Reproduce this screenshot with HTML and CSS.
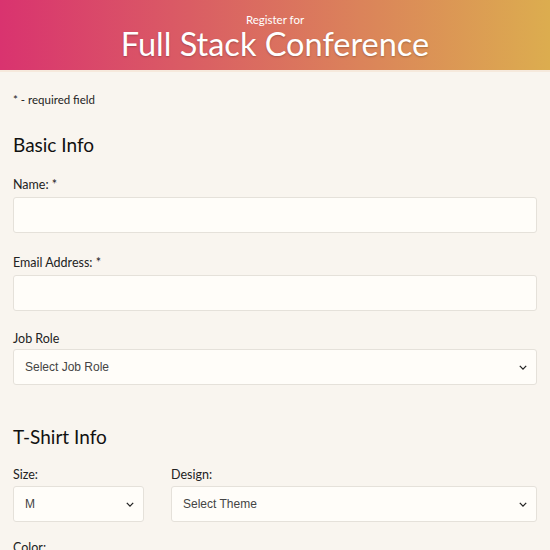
FILE: index.html
```html
<!DOCTYPE html>
<html>
<head>
<meta charset="utf-8">
<link rel="stylesheet" href="styles.css">
</head>
<body>
<header class="hero">
  <span class="hero-sub">Register for</span>
  <h1 class="hero-title">Full Stack Conference</h1>
</header>
<main class="form">
  <p class="note">* - required field</p>
  <section class="group">
    <h2 class="group-title">Basic Info</h2>
    <div class="field">
      <label class="label">Name: *</label>
      <input class="input" type="text">
    </div>
    <div class="field email">
      <label class="label">Email Address: *</label>
      <input class="input" type="text">
    </div>
    <div class="field job">
      <label class="label">Job Role</label>
      <div class="select">
        <span>Select Job Role</span>
        <svg class="chev" viewBox="0 0 10 6" width="8" height="5"><path d="M1 1l4 4 4-4" fill="none" stroke="#222" stroke-width="1.6"/></svg>
      </div>
    </div>
  </section>
  <section class="group tshirt">
    <h2 class="group-title">T-Shirt Info</h2>
    <div class="row">
      <div class="field size">
        <label class="label">Size:</label>
        <div class="select">
          <span>M</span>
          <svg class="chev" viewBox="0 0 10 6" width="8" height="5"><path d="M1 1l4 4 4-4" fill="none" stroke="#222" stroke-width="1.6"/></svg>
        </div>
      </div>
      <div class="field design">
        <label class="label">Design:</label>
        <div class="select">
          <span>Select Theme</span>
          <svg class="chev" viewBox="0 0 10 6" width="8" height="5"><path d="M1 1l4 4 4-4" fill="none" stroke="#222" stroke-width="1.6"/></svg>
        </div>
      </div>
    </div>
    <div class="field">
      <label class="label">Color:</label>
    </div>
  </section>
</main>
</body>
</html>
```
FILE: styles.css
```css
html, body { margin: 0; padding: 0; }
body {
  background: #f9f5ef;
  font-family: "Lato", "Open Sans", sans-serif;
  color: #111;
  width: 550px;
  overflow: hidden;
}
.hero {
  height: 72px;
  background: linear-gradient(to right, #d9336f, #dcad4f);
  border-bottom: 2px solid #f6e9dc;
  display: flex;
  flex-direction: column;
  align-items: center;
  color: #fff;
  box-sizing: border-box;
  padding-top: 13px;
}
.hero-sub { font-size: 11.5px; line-height: 14px; }
.hero-title {
  margin: 0;
  font-weight: 400;
  font-size: 32.5px;
  line-height: 34px;
  text-shadow: 0 1px 2px rgba(0,0,0,0.25);
}
.form { padding: 0 13px; }
.note { margin: 0; padding-top: 21px; font-size: 11.5px; line-height: 14px; color: #222; }
.group-title { margin: 0; font-weight: 400; font-size: 19px; line-height: 24px; }
.group { padding-top: 26px; }
.group-title { margin-bottom: 21px; }
.field { display: flex; flex-direction: column; margin-bottom: 23px; }
.email { margin-bottom: 21px; }
.job .label { margin-bottom: 3px; }
.label { font-size: 12.5px; line-height: 14px; margin-bottom: 5px; color: #222; }
.input, .select {
  box-sizing: border-box;
  height: 36px;
  width: 100%;
  background: #fffdf9;
  border: 1.5px solid #e5e1da;
  border-radius: 3px;
  margin: 0;
  font: inherit;
}
.select {
  display: flex;
  align-items: center;
  justify-content: space-between;
  padding: 0 9px 0 11px;
  font-family: "Liberation Sans", Arial, sans-serif;
  font-size: 12px;
  color: #444;
}
.chev { display: block; }
.tshirt { padding-top: 17px; }
.tshirt .group-title { margin-bottom: 19px; }
.row { display: flex; gap: 27px; }
.row .field { margin-bottom: 19px; }
.row .label { margin-bottom: 4px; }
.size { width: 131px; flex: none; }
.design { flex: 1; }
```
